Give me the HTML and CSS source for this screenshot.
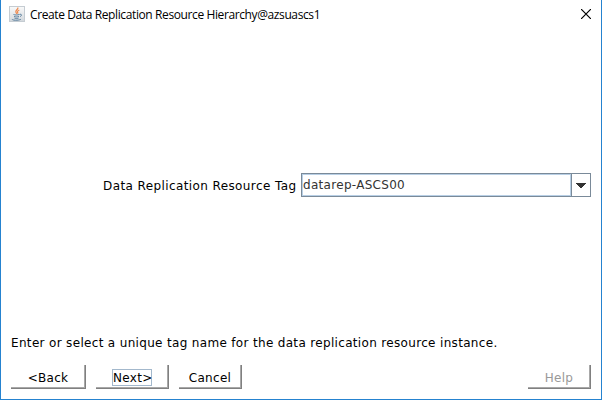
FILE: index.html
```
<!DOCTYPE html>
<html lang="en">
<head>
<meta charset="utf-8">
<title>Create Data Replication Resource Hierarchy@azsuascs1</title>
<link rel="stylesheet" href="styles.css">
</head>
<body>
<div class="window">
  <header class="titlebar">
    <svg class="java" width="16" height="16" viewBox="0 0 16 16">
      <defs><linearGradient id="tile" x2="0" y2="1"><stop stop-color="#fafafa"/><stop offset="1" stop-color="#d2d7dc"/></linearGradient></defs>
      <rect x=".5" y=".5" width="15" height="15" fill="url(#tile)" stroke="#c5ccd2"/>
      <path d="M8.700 1.500c1.200 2-3 2.700-1.700 4.800l1 1.500M10.300 4C7.500 5.300 8.500 6 9 7.500" fill="none" stroke="#ed8b52" stroke-width="1.300"/>
      <path d="M4.500 8.500c1.500.7 4 .6 6 0M5 10.500c1.500.6 3.500.6 5 0M5.500 12.200c1.200.5 2.800.5 4 0M10.800 8.300c2.500-.4 1.900 1.700.2 2.300M3.500 13c-1.500 1.500 6.500 1.700 8.500.2" fill="none" stroke="#5b7f9e" stroke-width="1"/>
    </svg>
    <h1 class="title"><span>Create Data Replication Resource Hierarchy@azsuascs1</span></h1>
    <svg class="close" width="10" height="10" viewBox="0 0 10 10"><path d="M0 0l10 10M10 0L0 10" stroke="#000" stroke-width="1.200"/></svg>
  </header>
  <main class="content">
    <div class="field">
      <span class="label">Data Replication Resource Tag</span>
      <div class="combo">
        <div class="value"><span>datarep-ASCS00</span></div>
        <div class="drop"><svg width="10" height="5" viewBox="0 0 10 5"><path d="M0 0h10v1H9v1H8v1H7v1H6v1H4V4H3V3H2V2H1V1H0z" fill="#333"/></svg></div>
      </div>
    </div>
  </main>
  <p class="hint"><span>Enter or select a unique tag name for the data replication resource instance.</span></p>
  <footer class="buttons">
    <div class="button back"><span>&lt;Back</span></div>
    <div class="button next"><span class="focus">Next&gt;</span></div>
    <div class="button cancel"><span>Cancel</span></div>
    <div class="button help"><span>Help</span></div>
  </footer>
</div>
</body>
</html>
```
FILE: styles.css
```
* { box-sizing: border-box; }
body { margin: 0; background: #fff; color: #000; font: 12px/16px "DejaVu Sans", sans-serif; }
.window { width: 602px; height: 400px; border: 1px solid #2583d0; border-top: 0; display: flex; flex-direction: column; }
.titlebar { height: 30px; display: flex; padding: 6px 10px 0 8px; }
.java { margin-right: 5px; }
.title { flex: 1; margin: 1px 0 0; font: 12px/16px "Open Sans", sans-serif; letter-spacing: -0.39px; white-space: nowrap; }
.close { margin-top: 3px; }
.content { flex: 1; padding: 143px 10px 0; }
.field { display: flex; justify-content: flex-end; height: 24px; }
.label { width: 198px; padding-top: 5px; white-space: nowrap; letter-spacing: 0.4px; }
.combo { width: 290px; display: flex; border: 1px solid #7a8a99; }
.value { flex: 1; border: 1px solid #b8cfe5; padding: 2px 0 0; color: #333; letter-spacing: 0.3px; }
.drop { width: 19px; border-left: 1px solid #7a8a99; display: flex; align-items: center; justify-content: center; }
.hint { margin: 0; height: 31px; padding: 1px 10px 0; white-space: nowrap; letter-spacing: 0.33px; }
.buttons { height: 34px; display: flex; gap: 10px; padding: 0 10px; }
.button { height: 24px; display: flex; align-items: center; justify-content: center; padding-top: 2px; border: 0 solid #808080; border-width: 0 1px 1px 0; box-shadow: inset -1px -1px #a8a8a8; letter-spacing: 0.3px; }
.back { width: 75px; }
.next { width: 73px; }
.cancel { width: 63px; }
.help { width: 63px; margin-left: auto; color: #999; }
.focus { height: 17px; width: 40px; border: 1px solid #a3b8cc; line-height: 17px; }
```
